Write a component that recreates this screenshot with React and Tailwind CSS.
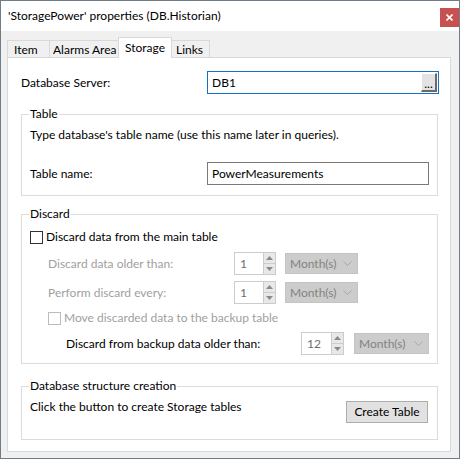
import React from 'react';

function Tab({ label, width, active, pad = 'pl-[6px]' }) {
  if (active) {
    return (
      <div
        className={`relative z-10 -mb-px -ml-px h-[21px] ${width} whitespace-nowrap border border-b-0 border-[#d9d9d9] bg-white ${pad} pt-[2px] leading-[16px]`}
      >
        {label}
      </div>
    );
  }
  return (
    <div
      className={`-ml-px h-[17px] ${width} overflow-hidden whitespace-nowrap border border-b-0 border-[#d9d9d9] bg-[#f0f0f0] ${pad} pt-[1px] leading-[16px] first:ml-0`}
    >
      {label}
    </div>
  );
}

function GroupBox({ title, className, children }) {
  return (
    <fieldset className={`w-[417px] border border-[#dcdcdc] px-[8px] ${className}`}>
      <legend className="-ml-[1px] px-[1px] leading-[16px]">{title}</legend>
      {children}
    </fieldset>
  );
}

function Spin({ value, width }) {
  return (
    <div className={`flex h-[23px] ${width} border border-[#cccccc] bg-white`}>
      <div className="flex flex-1 items-center pl-[5px] text-[#6d6d6d]">{value}</div>
      <div className="flex w-[12px] flex-col border-l border-[#cccccc]">
        <div className="flex flex-1 items-center justify-center border-b border-[#cccccc] bg-[#e8e8e8]">
          <svg width="7" height="4" viewBox="0 0 7 4">
            <path d="M0 4 L3.5 0 L7 4Z" fill="#8a8a8a" />
          </svg>
        </div>
        <div className="flex flex-1 items-center justify-center bg-[#e8e8e8]">
          <svg width="7" height="4" viewBox="0 0 7 4">
            <path d="M0 0 L3.5 4 L7 0Z" fill="#8a8a8a" />
          </svg>
        </div>
      </div>
    </div>
  );
}

function Combo({ width, className }) {
  return (
    <div
      className={`flex h-[21px] ${width} items-center justify-between border border-[#c4c4c4] bg-[#cccccc] pl-[4px] pr-[5px] text-[#838383] ${className}`}
    >
      <span>Month(s)</span>
      <svg width="9" height="5" viewBox="0 0 9 5">
        <path d="M0.5 0.5 L4.5 4.5 L8.5 0.5" stroke="#a9a9a9" fill="none" />
      </svg>
    </div>
  );
}

function CheckBox({ disabled }) {
  return (
    <div
      className={`h-[13px] w-[13px] border bg-white ${
        disabled ? 'border-[#bcbcbc]' : 'border-[#333333]'
      }`}
    />
  );
}

export default function App() {
  return (
    <div className="flex h-[459px] w-[460px] flex-col border border-[#6f7c89] bg-[#f0f0f0] font-['Lato','Noto_Sans',sans-serif] text-[12px] text-black">
      {/* title bar */}
      <div className="flex h-[30px] justify-between bg-white">
        <div className="flex items-center pl-[7px]">'StoragePower' properties (DB.Historian)</div>
        <div className="mt-[7px] flex h-[19px] w-[19px] items-center justify-center bg-[#c75050]">
          <svg width="7" height="7" viewBox="0 0 7 7">
            <path d="M0.5 0.5 L6.5 6.5 M6.5 0.5 L0.5 6.5" stroke="white" strokeWidth="1.6" />
          </svg>
        </div>
      </div>

      <div className="pl-[6px] pt-[6px]">
        {/* tabs */}
        <div className="flex h-[20px] items-end">
          <Tab label="Item" width="w-[43px]" />
          <Tab label="Alarms Area" width="w-[70px]" pad="pl-[3px]" />
          <Tab label="Storage" width="w-[54px]" active />
          <Tab label="Links" width="w-[39px]" pad="pl-[4px]" />
        </div>

        {/* panel */}
        <div className="h-[395px] w-[444px] border border-[#d9d9d9] bg-white pl-[13px] pt-[13px]">
          <div className="flex items-center">
            <div className="w-[186px]">Database Server:</div>
            <div className="flex h-[23px] w-[232px] items-center justify-between border border-[#1670c4] pl-[4px]">
              <span>DB1</span>
              <div className="mr-px flex h-[19px] w-[16px] items-end justify-center border-b-2 border-l border-r-2 border-t border-b-[#6a6a6a] border-l-white border-r-[#6a6a6a] border-t-white bg-[#e3e3e3] leading-[12px]">
                ...
              </div>
            </div>
          </div>

          <GroupBox title="Table" className="mt-[12px] pb-[10px]">
            <div className="mt-[5px] leading-[16px]">
              Type database's table name (use this name later in queries).
            </div>
            <div className="mt-[19px] flex items-center">
              <div className="w-[177px]">Table name:</div>
              <div className="flex h-[23px] w-[222px] items-center border border-[#7a7a7a] pl-[4px]">
                PowerMeasurements
              </div>
            </div>
          </GroupBox>

          <GroupBox title="Discard" className="mt-[10px] pb-[8px]">
            <div className="mt-[7px] flex h-[16px] items-center gap-[3px]">
              <CheckBox />
              <span>Discard data from the main table</span>
            </div>
            <div className="mt-[7px] flex items-center">
              <div className="w-[204px] pl-[18px] text-[#a0a0a0]">Discard data older than:</div>
              <Spin value="1" width="w-[42px]" />
              <Combo width="w-[73px]" className="ml-[9px]" />
            </div>
            <div className="mt-[6px] flex items-center">
              <div className="w-[204px] pl-[18px] text-[#a0a0a0]">Perform discard every:</div>
              <Spin value="1" width="w-[42px]" />
              <Combo width="w-[73px]" className="ml-[9px]" />
            </div>
            <div className="mt-[6px] flex h-[16px] items-center gap-[3px] pl-[18px]">
              <CheckBox disabled />
              <span className="text-[#a0a0a0]">Move discarded data to the backup table</span>
            </div>
            <div className="mt-[6px] flex items-center">
              <div className="w-[271px] pl-[36px]">Discard from backup data older than:</div>
              <Spin value="12" width="w-[43px]" />
              <Combo width="w-[75px]" className="ml-[10px]" />
            </div>
          </GroupBox>

          <GroupBox title="Database structure creation" className="mt-[14px] pb-[16px]">
            <div className="flex items-start justify-between">
              <div className="mt-[5px] leading-[16px]">Click the button to create Storage tables</div>
              <button className="mr-px mt-[7px] h-[22px] w-[82px] border border-[#adadad] bg-[#e1e1e1]">
                Create Table
              </button>
            </div>
          </GroupBox>
        </div>
      </div>
    </div>
  );
}
